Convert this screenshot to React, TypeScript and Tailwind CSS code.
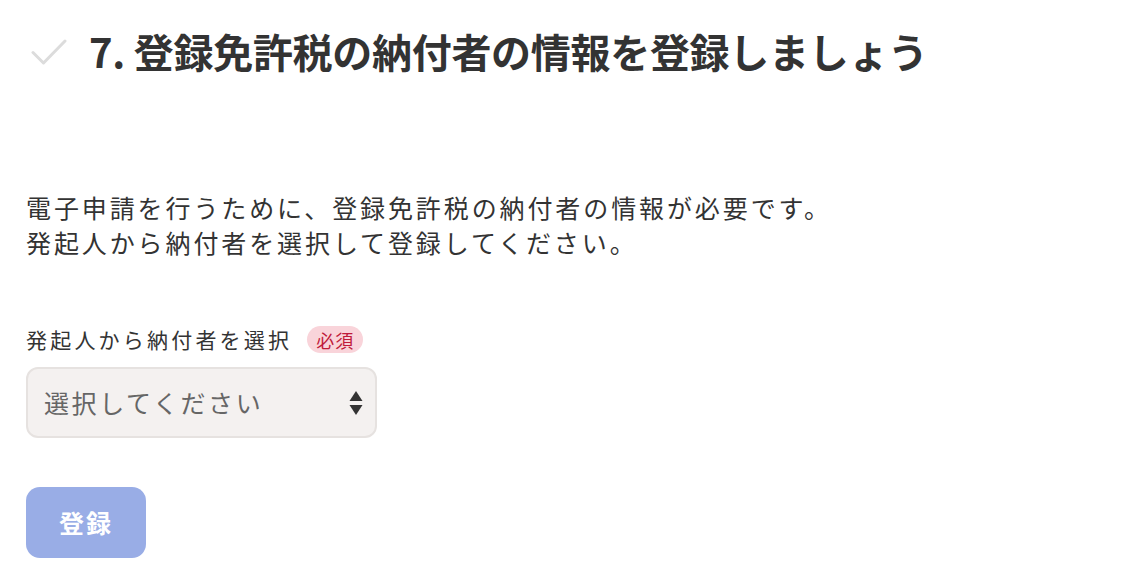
import { useState } from "react"

const font = { fontFamily: '"Noto Sans CJK JP", "Noto Sans", sans-serif' }

function App() {
  const [payer, setPayer] = useState("")

  return (
    <div className="min-h-screen w-full bg-white text-[#333]" style={font}>
      <div className="flex flex-col pl-[26px]">
        <div className="mt-[31px] flex h-[40px] items-center">
          <svg width="36" height="30" viewBox="0 0 36 30" className="ml-[5px] mr-[22px] mt-[2px] shrink-0" fill="none">
            <path d="M2 15.5 L12.5 26 L34 4" stroke="#dcdcdc" strokeWidth="3" strokeLinecap="round" strokeLinejoin="round" />
          </svg>
          <h1 className="text-[40px] font-bold leading-[40px] tracking-[-0.3px]">
            7. 登録免許税の納付者の情報を登録しましょう
          </h1>
        </div>

        <p className="mt-[119px] text-[25px] leading-[35px] tracking-[2.9px]">
          電子申請を行うために、登録免許税の納付者の情報が必要です。
          <br />
          発起人から納付者を選択して登録してください。
        </p>

        <div className="mt-[66px] flex h-[27px] items-center gap-[15px]">
          <label htmlFor="payer" className="text-[21px] leading-[27px] tracking-[3.2px]">
            発起人から納付者を選択
          </label>
          <span className="flex h-[27px] w-[56px] items-center justify-center rounded-full bg-[#f9d4da] text-[18px] leading-none tracking-[1px] text-[#c01a3a]">
            必須
          </span>
        </div>

        <div className="relative mt-[14px] h-[71px] w-[351px]">
          <select
            id="payer"
            value={payer}
            onChange={(e) => setPayer(e.target.value)}
            className="h-full w-full appearance-none rounded-[12px] border-2 border-[#e6e2e0] bg-[#f4f1f0] pl-[16px] text-[25px] tracking-[2.6px] text-[#666] outline-none"
            style={font}
          >
            <option value="">選択してください</option>
          </select>
          <svg width="14" height="24" viewBox="0 0 14 24" className="pointer-events-none absolute right-[14px] top-[24px]">
            <path d="M7 0 L13.5 10 L0.5 10 Z" fill="#333" />
            <path d="M0.5 14 L13.5 14 L7 24 Z" fill="#333" />
          </svg>
        </div>

        <button
          type="button"
          className="mt-[49px] h-[71px] w-[120px] rounded-[14px] bg-[#99ade6] text-[25px] font-bold tracking-[2px] text-white"
          style={font}
        >
          登録
        </button>
      </div>
    </div>
  )
}

export default App
